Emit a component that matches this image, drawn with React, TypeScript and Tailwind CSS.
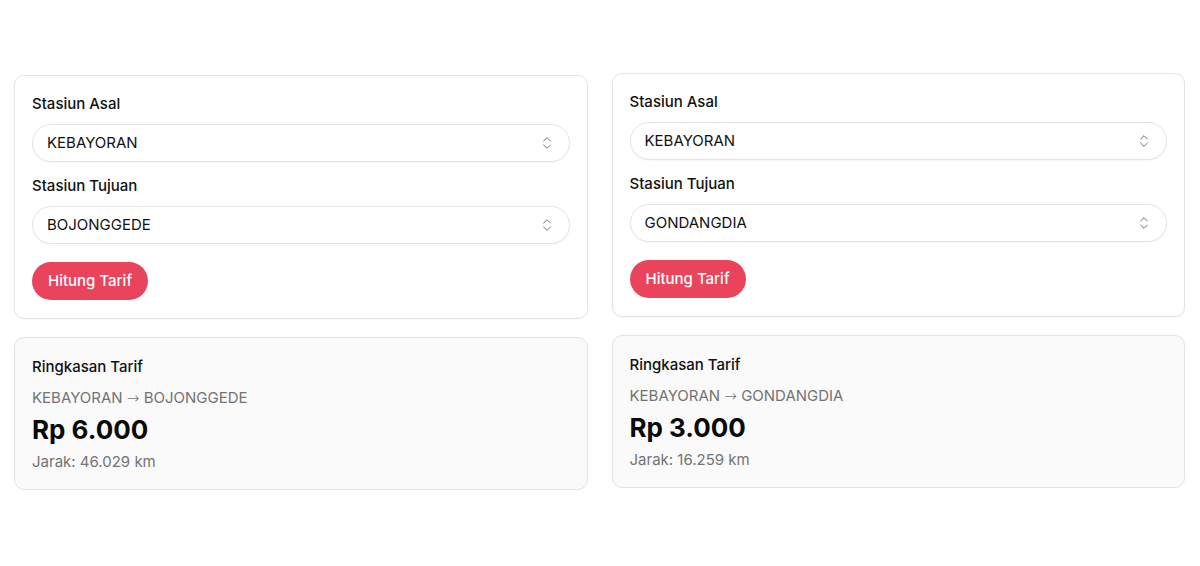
import React from "react";
import { ChevronsUpDown } from "lucide-react";

type Fare = {
  from: string;
  to: string;
  price: string;
  distance: string;
  offset: string;
};

const fares: Fare[] = [
  { from: "KEBAYORAN", to: "BOJONGGEDE", price: "Rp 6.000", distance: "46.029 km", offset: "mt-[75px]" },
  { from: "KEBAYORAN", to: "GONDANGDIA", price: "Rp 3.000", distance: "16.259 km", offset: "mt-[73px]" },
];

const SelectBox = ({ value }: { value: string }) => (
  <div className="flex h-[38px] items-center justify-between rounded-full border border-[#e4e4e4] bg-white pl-[14px] pr-[14px] shadow-[0_1px_2px_rgba(0,0,0,0.04)]">
    <span className="text-[15px] font-normal text-[#111]">{value}</span>
    <ChevronsUpDown size={16} strokeWidth={1.5} className="text-[#707070]" />
  </div>
);

const FarePanel = ({ fare }: { fare: Fare }) => (
  <div className={`flex flex-col gap-[18px] ${fare.offset}`}>
    {/* form card */}
    <div className="rounded-[10px] border border-[#e3e3e3] bg-white px-[17px] pt-[18px] pb-[18px] shadow-[0_1px_2px_rgba(0,0,0,0.03)]">
      <label className="block text-[15px] font-medium leading-[20px] text-[#111]">Stasiun Asal</label>
      <div className="mt-[10px]">
        <SelectBox value={fare.from} />
      </div>
      <label className="mt-[14px] block text-[15px] font-medium leading-[20px] text-[#111]">Stasiun Tujuan</label>
      <div className="mt-[10px]">
        <SelectBox value={fare.to} />
      </div>
      <button className="mt-[18px] h-[38px] rounded-full bg-[#e9445b] px-[16px] text-[15px] font-medium text-white">
        Hitung Tarif
      </button>
    </div>

    {/* summary card */}
    <div className="rounded-[10px] border border-[#e3e3e3] bg-[#fafafa] px-[17px] pt-[19px] pb-[17px]">
      <p className="text-[15px] font-medium leading-[20px] text-[#111]">Ringkasan Tarif</p>
      <p className="mt-[11px] text-[15px] leading-[20px] text-[#737373]">
        {fare.from} <span className="font-['DejaVu_Sans',sans-serif] font-light">→</span> {fare.to}
      </p>
      <p className="mt-[6px] text-[26px] font-bold leading-[32px] text-[#0a0a0a]">{fare.price}</p>
      <p className="mt-[6px] text-[15px] leading-[20px] text-[#737373]">Jarak: {fare.distance}</p>
    </div>
  </div>
);

export default function App() {
  return (
    <div className="min-h-screen bg-white font-['Inter',sans-serif]">
      <div className="grid grid-cols-2 items-start gap-[24px] pl-[14px] pr-[15px]">
        {fares.map((f) => (
          <FarePanel key={f.to} fare={f} />
        ))}
      </div>
    </div>
  );
}
